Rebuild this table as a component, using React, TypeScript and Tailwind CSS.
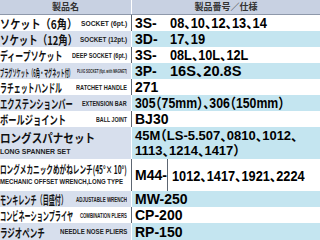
import { useLayoutEffect, useRef, useState, type ReactNode } from "react";

function Fit({ w, right = false, className = "", children }: { w: number; right?: boolean; className?: string; children: ReactNode }) {
  const ref = useRef<HTMLSpanElement>(null);
  const [s, setS] = useState(1);
  useLayoutEffect(() => {
    const measure = () => {
      if (ref.current) {
        const n = ref.current.offsetWidth;
        if (n > 0) setS(w / n);
      }
    };
    measure();
    if (document.fonts) document.fonts.ready.then(measure);
  }, [w]);
  return (
    <span
      ref={ref}
      className={`inline-block whitespace-nowrap ${right ? "origin-right" : "origin-left"} ${className}`}
      style={{ transform: `scaleX(${s})` }}
    >
      {children}
    </span>
  );
}

type Row = {
  jp: string;
  jpw: number;
  jpc?: string;
  en: string;
  enw: number;
  enc?: string;
  code: string;
  codew?: number;
  val?: string;
  valw?: number;
  band: boolean;
};

const top: Row[] = [
  { jp: "ソケット（6角）", jpw: 77, en: "SOCKET (6pt.)", enw: 46, code: "3S-", val: "08、10、12、13、14", valw: 97, band: false },
  { jp: "ソケット（12角）", jpw: 77, en: "SOCKET (12pt.)", enw: 47, code: "3D-", val: "17、19", valw: 35, band: true },
  { jp: "ディープソケット", jpw: 62, en: "DEEP SOCKET (6pt.)", enw: 55, code: "3S-", val: "08L、10L、12L", valw: 78, band: false },
  { jp: "プラグソケット（6角・マグネット付）", jpw: 73, jpc: "text-[10px]", en: "PLUG SOCKET (6pt. with MAGNET)", enw: 50, enc: "text-[6px]", code: "3P-", val: "16S、20.8S", valw: 72, band: true },
  { jp: "ラチェットハンドル", jpw: 62, en: "RATCHET HANDLE", enw: 51, code: "271", band: false },
  { jp: "エクステンションバー", jpw: 73, en: "EXTENSION BAR", enw: 45, code: "305（75mm）、306（150mm）", codew: 149, band: true },
  { jp: "ボールジョイント", jpw: 66, en: "BALL JOINT", enw: 31, code: "BJ30", band: false },
];

const bottom: Row[] = [
  { jp: "モンキレンチ（目盛付）", jpw: 67, en: "ADJUSTABLE WRENCH", enw: 51, code: "MW-250", band: true },
  { jp: "コンビネーションプライヤ", jpw: 73, en: "COMBINATION PLIERS", enw: 47, code: "CP-200", band: false },
  { jp: "ラジオペンチ", jpw: 45, en: "NEEDLE NOSE PLIERS", enw: 67, code: "RP-150", band: true },
];

const jpFont = "font-['Noto_Sans_CJK_JP',sans-serif]";
const numFont = "font-['Liberation_Sans','Noto_Sans_CJK_JP',sans-serif] [font-feature-settings:'halt']";
const numText = `${numFont} font-bold text-[14px] leading-none text-black`;

function Divider({ band }: { band: boolean }) {
  return <div className={`w-px self-stretch ${band ? "bg-white" : "bg-[#5d6672]"}`} />;
}

function SingleRow({ r, last = false }: { r: Row; last?: boolean }) {
  return (
    <div className={`flex ${last ? "h-[17px]" : "h-[16px]"}`}>
      <div className={`w-[131px] flex items-center pr-[4px] overflow-visible ${r.band ? "bg-[#d7dfed]" : "bg-white"}`}>
        <div className="flex-1 min-w-0">
          <Fit w={r.jpw} className={`${jpFont} font-bold text-[#111] leading-none ${r.jpc ?? "text-[12px]"}`}>{r.jp}</Fit>
        </div>
        <div className="shrink-0 flex justify-end">
          <Fit w={r.enw} right className={`font-['Liberation_Sans',sans-serif] font-bold text-[#222] leading-none ${r.enc ?? "text-[7px]"}`}>{r.en}</Fit>
        </div>
      </div>
      <Divider band={r.band} />
      <div className={`flex-1 flex items-center pl-[3px] ${r.band ? "bg-[#c4e5f0]" : "bg-white"}`}>
        {r.val ? (
          <>
            <span className={`w-[35px] shrink-0 ${numText}`}>{r.code}</span>
            <Fit w={r.valw ?? 60} className={numText}>{r.val}</Fit>
          </>
        ) : r.codew ? (
          <Fit w={r.codew} className={numText}>{r.code}</Fit>
        ) : (
          <span className={`${numText} whitespace-nowrap`}>{r.code}</span>
        )}
      </div>
    </div>
  );
}

export default function App() {
  return (
    <div className="w-[320px] h-[240px] overflow-hidden bg-white flex flex-col">
      <div className="flex h-[15px] bg-[#c8d1e2] border-b border-[#8e98aa]">
        <div className={`w-[131px] flex items-center justify-center ${jpFont} font-bold text-[9px] text-[#333]`}>製品名</div>
        <div className="w-px self-stretch bg-white" />
        <div className={`flex-1 flex items-center justify-center ${jpFont} font-bold text-[9px] text-[#333]`}>製品番号／仕様</div>
      </div>
      {top.map((r, i) => (
        <SingleRow key={i} r={r} />
      ))}
      <div className="flex h-[32px]">
        <div className="w-[131px] flex flex-col justify-center bg-[#d7dfed] pt-[1px]">
          <div className="h-[15px] flex items-center">
            <Fit w={95} className={`${jpFont} font-bold text-[12px] leading-none text-[#111]`}>ロングスパナセット</Fit>
          </div>
          <div className="h-[12px] flex items-center">
            <Fit w={70} className="font-['Liberation_Sans',sans-serif] font-bold text-[7px] leading-none text-[#222]">LONG SPANNER SET</Fit>
          </div>
        </div>
        <Divider band />
        <div className="flex-1 flex flex-col justify-center gap-[2px] pl-[3px] bg-[#c4e5f0]">
          <div className="h-[13px] flex items-center">
            <Fit w={163} className={`${numFont} font-bold text-[13px] leading-none text-black`}>45M（LS-5.507、0810、1012、</Fit>
          </div>
          <div className="h-[13px] flex items-center">
            <Fit w={105} className={`${numFont} font-bold text-[13px] leading-none text-black`}>1113、1214、1417）</Fit>
          </div>
        </div>
      </div>
      <div className="flex h-[32px]">
        <div className="w-[131px] flex flex-col justify-center bg-white">
          <div className="h-[13px] flex items-center">
            <Fit w={127} className={`${jpFont} font-bold text-[11px] leading-none text-[#111]`}>ロングメカニックめがねレンチ(45°× 10°)</Fit>
          </div>
          <div className="h-[12px] flex items-center">
            <Fit w={123} className="font-['Liberation_Sans',sans-serif] font-bold text-[7px] leading-none text-[#222]">MECHANIC OFFSET WRENCH,LONG TYPE</Fit>
          </div>
        </div>
        <Divider band={false} />
        <div className="flex-1 flex items-center bg-white">
          <span className={`w-[35px] pl-[3px] shrink-0 ${numText}`}>M44-</span>
          <div className="w-px self-stretch bg-[#5d6672]" />
          <div className="pl-[4px]">
            <Fit w={133} className={numText}>1012、1417、1921、2224</Fit>
          </div>
        </div>
      </div>
      {bottom.map((r, i) => (
        <SingleRow key={i} r={r} last={i === bottom.length - 1} />
      ))}
    </div>
  );
}
